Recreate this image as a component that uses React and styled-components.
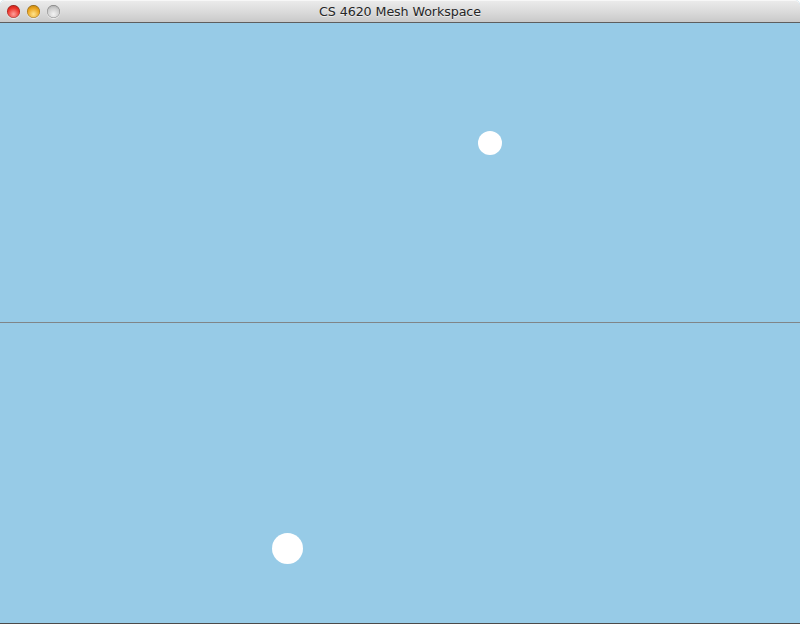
import React from 'react'
import styled, { createGlobalStyle } from 'styled-components'

const GlobalStyle = createGlobalStyle`
	html, body {
		margin: 0;
		padding: 0;
		background: #ffffff;
	}
	#root {
		width: 800px;
		height: 624px;
	}
`

const Window = styled.div`
	width: 800px;
	height: 624px;
	display: flex;
	flex-direction: column;
	overflow: hidden;
	border-radius: 5px 5px 0 0;
	background: #97cbe7;
	border-bottom: 1px solid #4a4a4a;
	box-sizing: border-box;
`

const TitleBar = styled.div`
	height: 22px;
	flex: none;
	display: flex;
	align-items: center;
	position: relative;
	background: linear-gradient(to bottom, #ececec 0%, #dcdcdc 50%, #c9c9c9 100%);
	border-bottom: 1px solid #5e5e5e;
	border-radius: 5px 5px 0 0;
	box-shadow: inset 0 1px 0 #f7f7f7;
`

const Lights = styled.div`
	display: flex;
	gap: 7px;
	position: absolute;
	left: 7px;
	top: 5px;
`

const colours = {
	close: 'radial-gradient(circle at 50% 70%, #ffa29c 0%, #ea3128 55%, #a3160f 100%)',
	min: 'radial-gradient(circle at 50% 70%, #ffe58f 0%, #e9a21b 55%, #9c6a07 100%)',
	zoom: 'radial-gradient(circle at 50% 70%, #f4f4f4 0%, #cbcbcb 55%, #8e8e8e 100%)',
}

const Light = styled.span`
	width: 13px;
	height: 13px;
	border-radius: 50%;
	background: ${props => colours[props.kind]};
	box-shadow: 0 1px 1px rgba(255,255,255,0.7), inset 0 0 0 0.5px rgba(0,0,0,0.35);
`

const Title = styled.div`
	flex: 1;
	text-align: center;
	font-family: 'DejaVu Sans', 'Liberation Sans', sans-serif;
	font-size: 12.7px;
	color: #262626;
	text-shadow: 0 1px 0 rgba(255,255,255,0.6);
	padding-top: 1px;
	letter-spacing: -0.1px;
`

const Pane = styled.div`
	position: relative;
	background: #97cbe7;
	${props => props.fixed ? `height: ${props.fixed}px; flex: none;` : 'flex: 1;'}
`

const Divider = styled.div`
	height: 1px;
	flex: none;
	background: #808588;
`

// vertices drawn on the pane canvas
const Dot = styled.div`
	position: absolute;
	border-radius: 50%;
	background: #ffffff;
`

const App = () => {
	const dots = [
		{ pane: 0, x: 490, y: 120, d: 24 },
		{ pane: 1, x: 287.5, y: 225, d: 31 },
	]

	const renderDots = pane => dots
		.filter(dot => dot.pane === pane)
		.map((dot, i) =>
			<Dot key={i} style={{ left: dot.x - dot.d / 2, top: dot.y - dot.d / 2, width: dot.d, height: dot.d }} />
		)

	return (
		<>
			<GlobalStyle />
			<Window>
				<TitleBar>
					<Lights>
						<Light kind="close" />
						<Light kind="min" />
						<Light kind="zoom" />
					</Lights>
					<Title>CS 4620 Mesh Workspace</Title>
				</TitleBar>
				<Pane fixed={299}>{ renderDots(0) }</Pane>
				<Divider />
				<Pane>{ renderDots(1) }</Pane>
			</Window>
		</>
	)
}

export default App
